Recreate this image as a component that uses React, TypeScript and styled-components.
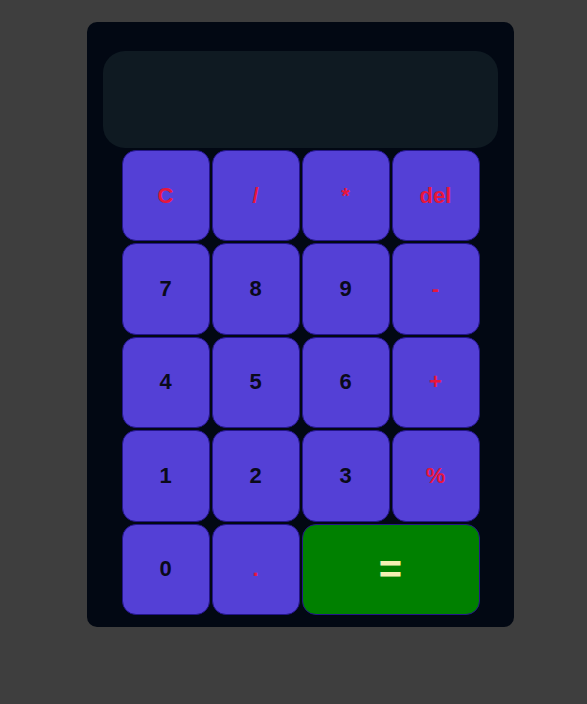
import React, { useState } from 'react';
import styled, { createGlobalStyle } from 'styled-components';

const GlobalStyle = createGlobalStyle`
  html, body {
    margin: 0;
    padding: 0;
    background: #3e3e3e;
    font-family: "Liberation Sans", Arial, sans-serif;
  }
`;

const Page = styled.div`
  width: 587px;
  height: 704px;
  padding: 22px 0 0 87px;
  box-sizing: border-box;
`;

const Body = styled.div`
  width: 427px;
  height: 605px;
  box-sizing: border-box;
  background: #020813;
  border-radius: 10px;
  padding: 29px 16px 0;
  display: flex;
  flex-direction: column;
  align-items: center;
  gap: 2px;
`;

const Display = styled.div`
  width: 100%;
  height: 97px;
  box-sizing: border-box;
  background: #0f1a22;
  border-radius: 22px;
  color: #ffffff;
  font-size: 36px;
  display: flex;
  align-items: center;
  justify-content: flex-end;
  padding: 0 24px;
`;

const Keys = styled.div`
  display: grid;
  grid-template-columns: repeat(4, 88px);
  grid-auto-rows: 91.4px;
  gap: 2px;
`;

type Tone = 'digit' | 'op' | 'equals';

const Key = styled.button<{ $tone: Tone; $wide?: boolean }>`
  grid-column: ${(p) => (p.$wide ? 'span 2' : 'auto')};
  border: 1px solid #24158a;
  border-radius: 14px;
  background: ${(p) => (p.$tone === 'equals' ? '#008000' : '#5440d6')};
  color: ${(p) =>
    p.$tone === 'equals' ? '#f3f0b4' : p.$tone === 'op' ? '#e8163c' : '#0a0a1a'};
  font-family: "Liberation Sans", Arial, sans-serif;
  font-weight: 700;
  font-size: ${(p) => (p.$tone === 'equals' ? '40px' : '22px')};
  cursor: pointer;
  padding: 0;
`;

const keys: { label: string; tone: Tone; wide?: boolean }[] = [
  { label: 'C', tone: 'op' },
  { label: '/', tone: 'op' },
  { label: '*', tone: 'op' },
  { label: 'del', tone: 'op' },
  { label: '7', tone: 'digit' },
  { label: '8', tone: 'digit' },
  { label: '9', tone: 'digit' },
  { label: '-', tone: 'op' },
  { label: '4', tone: 'digit' },
  { label: '5', tone: 'digit' },
  { label: '6', tone: 'digit' },
  { label: '+', tone: 'op' },
  { label: '1', tone: 'digit' },
  { label: '2', tone: 'digit' },
  { label: '3', tone: 'digit' },
  { label: '%', tone: 'op' },
  { label: '0', tone: 'digit' },
  { label: '.', tone: 'op' },
  { label: '=', tone: 'equals', wide: true },
];

const App = () => {
  const [value, setValue] = useState('');

  const press = (k: string) => {
    if (k === 'C') return setValue('');
    if (k === 'del') return setValue((v) => v.slice(0, -1));
    if (k === '=') {
      try {
        // eslint-disable-next-line no-new-func
        const out = Function(`return (${value.replace(/%/g, '/100')})`)();
        setValue(String(out));
      } catch {
        setValue('Error');
      }
      return;
    }
    setValue((v) => v + k);
  };

  return (
    <>
      <GlobalStyle />
      <Page>
        <Body>
          <Display>{value}</Display>
          <Keys>
            {keys.map((k) => (
              <Key key={k.label} $tone={k.tone} $wide={k.wide} onClick={() => press(k.label)}>
                {k.label}
              </Key>
            ))}
          </Keys>
        </Body>
      </Page>
    </>
  );
};

export default App;
